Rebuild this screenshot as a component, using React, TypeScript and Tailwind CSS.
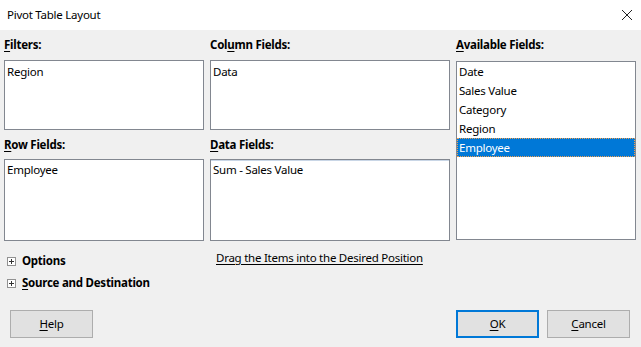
import React from "react";

const font = { fontFamily: '"Segoe UI", "Noto Sans", "Open Sans", sans-serif' };

function U({ children }: { children: React.ReactNode }) {
  return <span className="underline underline-offset-2">{children}</span>;
}

function Plus() {
  return (
    <span className="inline-flex h-[9px] w-[9px] items-center justify-center border border-[#919191] bg-white">
      <svg width="7" height="7" viewBox="0 0 7 7">
        <path d="M1 3.5H6M3.5 1V6" stroke="#333" strokeWidth="1" shapeRendering="crispEdges" />
      </svg>
    </span>
  );
}

export default function App() {
  const avail = ["Date", "Sales Value", "Category", "Region", "Employee"];
  return (
    <div className="h-[347px] w-[641px] overflow-hidden bg-[#f0f0f0] text-[11.5px] tracking-[-0.25px] text-black" style={font}>
      <div className="flex h-[30px] items-center justify-between bg-white pl-[7px] pr-[7px]">
        <span className="leading-none">Pivot Table Layout</span>
        <svg width="12" height="12" viewBox="0 0 12 12" className="mr-[1px]">
          <path d="M1 1L11 11M11 1L1 11" stroke="#222" strokeWidth="1" />
        </svg>
      </div>
      <div className="grid grid-cols-[200px_240px_180px] gap-x-[6px] pl-[4px] pt-[7px]">
        <div className="flex flex-col">
          <div className="h-[16px] font-bold leading-[16px]"><U>F</U>ilters:</div>
          <div className="mt-[7px] h-[70px] border border-[#828790] bg-white px-[2px] pt-[3px] leading-[16px]">Region</div>
          <div className="mt-[7px] h-[16px] font-bold leading-[16px]"><U>R</U>ow Fields:</div>
          <div className="mt-[6px] h-[82px] border border-[#828790] bg-white px-[2px] pt-[2px] leading-[16px]">Employee</div>
        </div>
        <div className="flex flex-col">
          <div className="h-[16px] font-bold leading-[16px]">Col<U>u</U>mn Fields:</div>
          <div className="mt-[7px] h-[70px] border border-[#828790] bg-white px-[2px] pt-[3px] leading-[16px]">Data</div>
          <div className="mt-[7px] h-[16px] font-bold leading-[16px]"><U>D</U>ata Fields:</div>
          <div className="mt-[6px] h-[82px] border border-[#828790] bg-white px-[2px] pt-[2px] leading-[16px] shadow-[inset_0_1px_0_#c9d6e6]">Sum - Sales Value</div>
        </div>
        <div className="flex flex-col">
          <div className="h-[16px] font-bold leading-[16px]"><U>A</U>vailable Fields:</div>
          <div className="mt-[8px] h-[179px] border border-[#828790] bg-white">
            {avail.map((a) => (
              <div
                key={a}
                className={
                  a === "Employee"
                    ? "h-[19px] border border-dotted border-[#f0a050] bg-[#0078d7] pl-[1px] leading-[17px] text-white"
                    : "h-[19px] pl-[2px] leading-[19px]"
                }
              >
                {a}
              </div>
            ))}
          </div>
        </div>
      </div>
      <div className="flex pl-[7px]">
        <div className="flex w-[203px] flex-col pt-[12px]">
          <div className="flex h-[16px] items-center gap-[6px] font-bold">
            <Plus />
            <span>Options</span>
          </div>
          <div className="mt-[6px] flex h-[16px] items-center gap-[6px] font-bold">
            <Plus />
            <span><U>S</U>ource and Destination</span>
          </div>
        </div>
        <div className="pl-[6px] pt-[8px]">
          <span className="underline underline-offset-2">Drag the Items into the Desired Position</span>
        </div>
      </div>
      <div className="mt-[19px] flex items-center pl-[10px] pr-[11px]">
        <button className="h-[28px] w-[83px] border border-[#adadad] bg-[#e1e1e1]"><U>H</U>elp</button>
        <div className="flex-1" />
        <button className="h-[28px] w-[83px] border-2 border-[#0078d7] bg-[#e1e1e1]"><U>O</U>K</button>
        <button className="ml-[8px] h-[28px] w-[83px] border border-[#adadad] bg-[#e1e1e1]"><U>C</U>ancel</button>
      </div>
    </div>
  );
}
